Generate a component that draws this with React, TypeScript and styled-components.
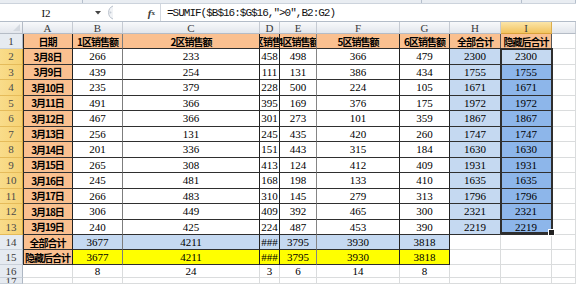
import React from 'react';
import styled, { createGlobalStyle } from 'styled-components';

const GlobalStyle = createGlobalStyle`
  html, body { margin: 0; padding: 0; background: #fff; overflow: hidden; }
  #root { width: 576px; height: 284px; }
`;

const Page = styled.div`
  width: 576px;
  height: 284px;
  overflow: hidden;
  display: flex;
  flex-direction: column;
  background: #fff;
`;

const RibbonEdge = styled.div`
  height: 3px;
  flex: none;
  display: flex;
  background: #e9edf2;
  border-bottom: 1px solid #ccd3dc;
`;

const RibbonSeg = styled.div<{ $w?: number }>`
  width: ${(p) => (p.$w ? `${p.$w}px` : 'auto')};
  flex: ${(p) => (p.$w ? 'none' : 1)};
  border-right: 1px solid #b5bfcc;
`;

const FormulaBar = styled.div`
  height: 17px;
  flex: none;
  display: flex;
  align-items: stretch;
  background: #fff;
  border-bottom: 1px solid #b3bcc8;
`;

const NameBox = styled.div`
  width: 92px;
  display: flex;
  align-items: center;
  justify-content: center;
  font: 11px 'Liberation Serif', serif;
  color: #111;
`;

const DropArrow = styled.div`
  width: 12px;
  display: flex;
  align-items: center;
  justify-content: center;
`;

const Knob = styled.div`
  width: 14px;
  display: flex;
  align-items: center;
  justify-content: flex-start;
`;

const FxZone = styled.div`
  width: 42px;
  display: flex;
  align-items: center;
  justify-content: flex-end;
  padding-right: 5px;
  box-sizing: border-box;
  font: italic bold 11px 'Liberation Serif', serif;
  color: #3b3b3b;
  sub {
    font-size: 7px;
    font-style: normal;
    vertical-align: -1px;
  }
`;

const FormulaText = styled.div`
  flex: 1;
  display: flex;
  align-items: center;
  padding-left: 6px;
  border-left: 1px solid #d3d8df;
  font: 11px 'Liberation Mono', monospace;
  letter-spacing: -1px;
  color: #111;
  white-space: nowrap;
`;

const Sheet = styled.div`
  flex: 1;
  position: relative;
  display: grid;
  grid-template-columns: 23px 50px 50px 137px 20px 37px 83px 50px 51px 51px 1fr;
  grid-template-rows: 12px 15px repeat(12, 15.5px) 15px 15px 13px 1fr;
  overflow: hidden;
`;

const Corner = styled.div`
  position: relative;
  background: linear-gradient(#f7f8fa, #e3e7ed);
  border-right: 1px solid #b5bcc6;
  border-bottom: 1px solid #b5bcc6;
  box-sizing: border-box;
  &::after {
    content: '';
    position: absolute;
    right: 2px;
    bottom: 2px;
    border-left: 7px solid transparent;
    border-bottom: 7px solid #d4d9e0;
  }
`;

const ColHead = styled.div<{ $sel?: boolean }>`
  display: flex;
  align-items: center;
  justify-content: center;
  box-sizing: border-box;
  overflow: hidden;
  font: 11px 'Liberation Serif', serif;
  color: #3a3a3a;
  background: ${(p) => (p.$sel ? 'linear-gradient(#fbe5a8, #f2c35f)' : 'linear-gradient(#f8f9fb, #e2e6ec)')};
  border-right: 1px solid ${(p) => (p.$sel ? '#dcae4c' : '#c6cbd3')};
  border-bottom: 1px solid ${(p) => (p.$sel ? '#d9a23a' : '#b5bcc6')};
`;

const RowHead = styled.div<{ $sel?: boolean }>`
  display: flex;
  align-items: center;
  justify-content: center;
  box-sizing: border-box;
  overflow: hidden;
  font: 11px 'Liberation Serif', serif;
  color: ${(p) => (p.$sel ? '#4a4a4a' : '#3c3c3c')};
  background: ${(p) => (p.$sel ? 'linear-gradient(90deg, #f9dc8a, #f6d274)' : '#e6ebf1')};
  border-right: 1px solid ${(p) => (p.$sel ? '#d9a93e' : '#aeb7c3')};
  border-bottom: 1px solid ${(p) => (p.$sel ? '#e5bb5a' : '#c9d0d9')};
`;

const Cell = styled.div<{ $bg: string; $r: string; $b: string; $l?: boolean; $cjk?: boolean }>`
  display: flex;
  align-items: center;
  justify-content: center;
  box-sizing: border-box;
  overflow: hidden;
  white-space: nowrap;
  background: ${(p) => p.$bg};
  border-right: 1px solid ${(p) => p.$r};
  border-bottom: 1px solid ${(p) => p.$b};
  box-shadow: ${(p) => (p.$l ? 'inset 1px 0 0 #2a2a2a' : 'none')};
  color: #000;
  font: ${(p) =>
    p.$cjk
      ? "bold 10px 'Noto Sans CJK SC', 'Noto Sans', sans-serif"
      : "11px 'Liberation Serif', serif"};
  letter-spacing: ${(p) => (p.$cjk ? '-1px' : '0')};
`;

const Selection = styled.div`
  position: absolute;
  grid-column: 10 / 11;
  grid-row: 3 / 15;
  top: -1px;
  left: -1px;
  right: -1px;
  bottom: 1px;
  z-index: 2;
  border: 2px solid #2e2e2e;
  pointer-events: none;
`;

const FillHandle = styled.div`
  position: absolute;
  right: -4px;
  bottom: -4px;
  width: 5px;
  height: 5px;
  background: #222;
  border: 1px solid #fff;
`;

const PEACH = '#fac090';
const LBLUE = '#c5d9f1';
const SBLUE = '#8db6ea';
const YELLOW = '#ffff00';
const GRID = '#dadcdd';
const HLINE = '#2f2f2f';

const COLS = ['A', 'B', 'C', 'D', 'E', 'F', 'G', 'H', 'I', 'J'];
const VCOL: Record<string, string> = {
  A: '#222',
  B: '#7d7d7d',
  C: '#222',
  D: '#222',
  E: '#858585',
  F: '#222',
  G: '#222',
  H: '#555',
  I: '#555',
};

const HEADERS = ['日期', '1区销售额', '2区销售额', '3区销售额', '4区销售额', '5区销售额', '6区销售额', '全部合计', '隐藏后合计'];

const DATA: (string | number)[][] = [
  ['3月8日', 266, 233, 458, 498, 366, 479, 2300, 2300],
  ['3月9日', 439, 254, 111, 131, 386, 434, 1755, 1755],
  ['3月10日', 235, 379, 228, 500, 224, 105, 1671, 1671],
  ['3月11日', 491, 366, 395, 169, 376, 175, 1972, 1972],
  ['3月12日', 467, 366, 301, 273, 101, 359, 1867, 1867],
  ['3月13日', 256, 131, 245, 435, 420, 260, 1747, 1747],
  ['3月14日', 201, 336, 151, 443, 315, 184, 1630, 1630],
  ['3月15日', 265, 308, 413, 124, 412, 409, 1931, 1931],
  ['3月16日', 245, 481, 168, 198, 133, 410, 1635, 1635],
  ['3月17日', 266, 483, 310, 145, 279, 313, 1796, 1796],
  ['3月18日', 306, 449, 409, 392, 465, 300, 2321, 2321],
  ['3月19日', 240, 425, 224, 487, 453, 390, 2219, 2219],
  ['全部合计', 3677, 4211, '###', 3795, 3930, 3818],
  ['隐藏后合计', 3677, 4211, '###', 3795, 3930, 3818],
  ['', 8, 24, 3, 6, 14, 8],
  [],
];

function bordered(r: number, ci: number) {
  if (r >= 1 && r <= 15 && ci <= 6) return true;
  if (r >= 1 && r <= 13 && (ci === 7 || ci === 8)) return true;
  return false;
}

function fill(r: number, ci: number) {
  if (r === 1 && ci <= 8) return PEACH;
  if (ci === 0 && r >= 2 && r <= 15) return PEACH;
  if (r === 14 && ci >= 1 && ci <= 6) return LBLUE;
  if (r === 15 && ci >= 1 && ci <= 6) return YELLOW;
  if (ci === 7 && r >= 2 && r <= 13) return LBLUE;
  if (ci === 8 && r === 2) return LBLUE;
  if (ci === 8 && r >= 3 && r <= 13) return SBLUE;
  return '#fff';
}

function text(r: number, ci: number): string {
  if (r === 1) return HEADERS[ci] ?? '';
  const row = DATA[r - 2];
  if (!row) return '';
  const v = row[ci];
  return v === undefined ? '' : String(v);
}

export default function App() {
  const rows = Array.from({ length: 17 }, (_, i) => i + 1);
  return (
    <Page>
      <GlobalStyle />
      <RibbonEdge>
        <RibbonSeg $w={82} />
        <RibbonSeg $w={338} />
        <RibbonSeg $w={99} />
        <RibbonSeg />
      </RibbonEdge>
      <FormulaBar>
        <NameBox>I2</NameBox>
        <DropArrow>
          <svg width="6" height="4" viewBox="0 0 6 4">
            <path d="M0 0 L6 0 L3 3.5 Z" fill="#444" />
          </svg>
        </DropArrow>
        <Knob>
          <svg width="10" height="15" viewBox="0 0 10 15">
            <path d="M9 1 A7 7 0 0 0 9 14" fill="#f1f3f6" stroke="#b9c1cc" strokeWidth="1" />
            <circle cx="6.5" cy="7.5" r="1" fill="#c4cbd4" />
          </svg>
        </Knob>
        <FxZone>
          f<sub>x</sub>
        </FxZone>
        <FormulaText>=SUMIF($B$16:$G$16,"&gt;0",B2:G2)</FormulaText>
      </FormulaBar>
      <Sheet>
        <Corner />
        {COLS.map((c) => (
          <ColHead key={c} $sel={c === 'I'}>
            {c === 'J' ? '' : c}
          </ColHead>
        ))}
        {rows.map((r) => (
          <React.Fragment key={r}>
            <RowHead $sel={r >= 2 && r <= 13}>{r}</RowHead>
            {COLS.map((c, ci) => {
              const b = bordered(r, ci);
              const t = text(r, ci);
              const cjk = /[\u4e00-\u9fff]/.test(t);
              return (
                <Cell
                  key={c}
                  $bg={fill(r, ci)}
                  $r={b ? VCOL[c] : GRID}
                  $b={b ? HLINE : GRID}
                  $l={ci === 0 && b}
                  $cjk={cjk}
                >
                  {t}
                </Cell>
              );
            })}
          </React.Fragment>
        ))}
        <Selection>
          <FillHandle />
        </Selection>
      </Sheet>
    </Page>
  );
}
